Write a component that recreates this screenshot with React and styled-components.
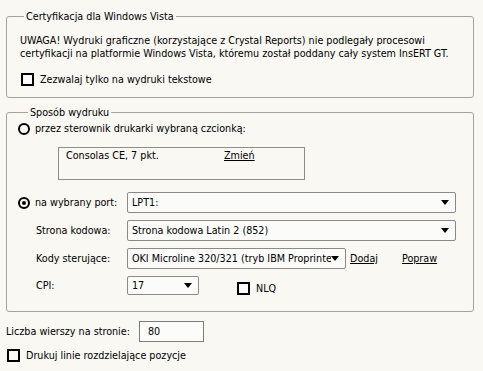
import styled, { createGlobalStyle } from "styled-components";

const GlobalStyle = createGlobalStyle`
  html, body {
    margin: 0;
    padding: 0;
    background: #f9f8f3;
  }
  body {
    font-family: "DejaVu Sans Condensed", "Liberation Sans", Arial, sans-serif;
    font-size: 10.7px;
    line-height: 13px;
    color: #000;
  }
`;

const Page = styled.div`
  width: 483px;
  height: 371px;
  box-sizing: border-box;
  padding: 10px 9px 0 6px;
  overflow: hidden;
`;

const Group = styled.fieldset`
  margin: ${({ $top }) => $top || 0}px 0 0;
  padding: ${({ $pad }) => $pad};
  border: 1px solid #a3a39b;
  border-radius: 3px;
  min-width: 0;
`;

const Legend = styled.legend`
  margin-left: 10px;
  padding: 0 2px;
  line-height: 13px;
`;

const Note = styled.p`
  margin: 0 0 0 6px;
  white-space: nowrap;
`;

const CheckRow = styled.label`
  display: flex;
  align-items: center;
  gap: 6px;
  height: 13px;
  margin: ${({ $margin }) => $margin || 0};
`;

const Box = styled.span`
  width: 13px;
  height: 13px;
  box-sizing: border-box;
  border: 2px solid #000;
  background: #fbfbf8;
  flex: none;
`;

const RadioRow = styled.div`
  display: flex;
  align-items: center;
  gap: 5px;
  height: 13px;
`;

const Radio = styled.span`
  width: 12px;
  height: 12px;
  box-sizing: border-box;
  border: 2px solid #000;
  border-radius: 50%;
  background: #fbfbf8;
  flex: none;
  display: flex;
  align-items: center;
  justify-content: center;

  &::after {
    content: "";
    width: 4px;
    height: 4px;
    border-radius: 50%;
    background: ${({ $checked }) => ($checked ? "#000" : "transparent")};
  }
`;

const FontBox = styled.div`
  margin: 12px 0 0 40px;
  width: 247px;
  height: 33px;
  box-sizing: border-box;
  border: 1px solid #8e8e88;
  padding: 1px 0 0 7px;
  display: flex;
`;

const FontName = styled.span`
  width: 158px;
`;

const Link = styled.span`
  text-decoration: underline;
  cursor: pointer;
  margin-left: ${({ $left }) => $left || 0}px;
`;

const Rows = styled.div`
  margin-top: 12px;
  display: grid;
  grid-template-columns: 109px 1fr;
  row-gap: 7px;
  align-items: center;
`;

const Label = styled.span`
  padding-left: ${({ $indent }) => $indent || 0}px;
`;

const Field = styled.div`
  display: flex;
  align-items: center;
`;

const Select = styled.div`
  width: ${({ $width }) => $width}px;
  height: ${({ $height }) => $height || 21}px;
  box-sizing: border-box;
  border: 1px solid #8a8a86;
  border-radius: 2px;
  background: #fbfcfa;
  display: flex;
  align-items: center;
  padding: 0 6px 0 4px;
  flex: none;
`;

const SelectText = styled.span`
  flex: 1;
  overflow: hidden;
  white-space: nowrap;
`;

const Arrow = () => (
  <svg width="8" height="5" viewBox="0 0 8 5" style={{ flex: "none" }}>
    <path d="M0 0H8L4 5Z" fill="#000" />
  </svg>
);

const Footer = styled.div`
  display: flex;
  align-items: center;
  margin-top: 9px;
`;

const Input = styled.div`
  width: 65px;
  height: 21px;
  box-sizing: border-box;
  border: 1px solid #7d7d78;
  background: #fcfcfb;
  margin-left: ${({ $left }) => $left}px;
  padding: 3px 0 0 8px;
`;

const App = () => {
  return (
    <>
      <GlobalStyle />
      <Page>
        <Group $pad="11px 12px 11px 7px">
          <Legend>Certyfikacja dla Windows Vista</Legend>
          <Note>
            UWAGA! Wydruki graficzne (korzystające z Crystal Reports) nie
            podlegały procesowi
            <br />
            certyfikacji na platformie Windows Vista, któremu został poddany
            cały system InsERT GT.
          </Note>
          <CheckRow $margin="13px 0 0 7px">
            <Box />
            Zezwalaj tylko na wydruki tekstowe
          </CheckRow>
        </Group>

        <Group $top={8} $pad="3px 17px 16px 11px">
          <Legend>Sposób wydruku</Legend>
          <RadioRow>
            <Radio />
            przez sterownik drukarki wybraną czcionką:
          </RadioRow>
          <FontBox>
            <FontName>Consolas CE, 7 pkt.</FontName>
            <Link>Zmień</Link>
          </FontBox>
          <Rows>
            <RadioRow>
              <Radio $checked />
              na wybrany port:
            </RadioRow>
            <Select $width={329}>
              <SelectText>LPT1:</SelectText>
              <Arrow />
            </Select>

            <Label $indent={18}>Strona kodowa:</Label>
            <Select $width={329}>
              <SelectText>Strona kodowa Latin 2 (852)</SelectText>
              <Arrow />
            </Select>

            <Label $indent={18}>Kody sterujące:</Label>
            <Field>
              <Select $width={219}>
                <SelectText>OKI Microline 320/321 (tryb IBM Proprinter)</SelectText>
                <Arrow />
              </Select>
              <Link $left={4}>Dodaj</Link>
              <Link $left={24}>Popraw</Link>
            </Field>

            <Label $indent={18}>CPI:</Label>
            <Field>
              <Select $width={72} $height={19}>
                <SelectText>17</SelectText>
                <Arrow />
              </Select>
              <CheckRow $margin="6px 0 0 38px">
                <Box />
                NLQ
              </CheckRow>
            </Field>
          </Rows>
        </Group>

        <Footer>
          Liczba wierszy na stronie:
          <Input $left={9}>80</Input>
        </Footer>
        <CheckRow $margin="7px 0 0 1px">
          <Box />
          Drukuj linie rozdzielające pozycje
        </CheckRow>
      </Page>
    </>
  );
};

export default App;
